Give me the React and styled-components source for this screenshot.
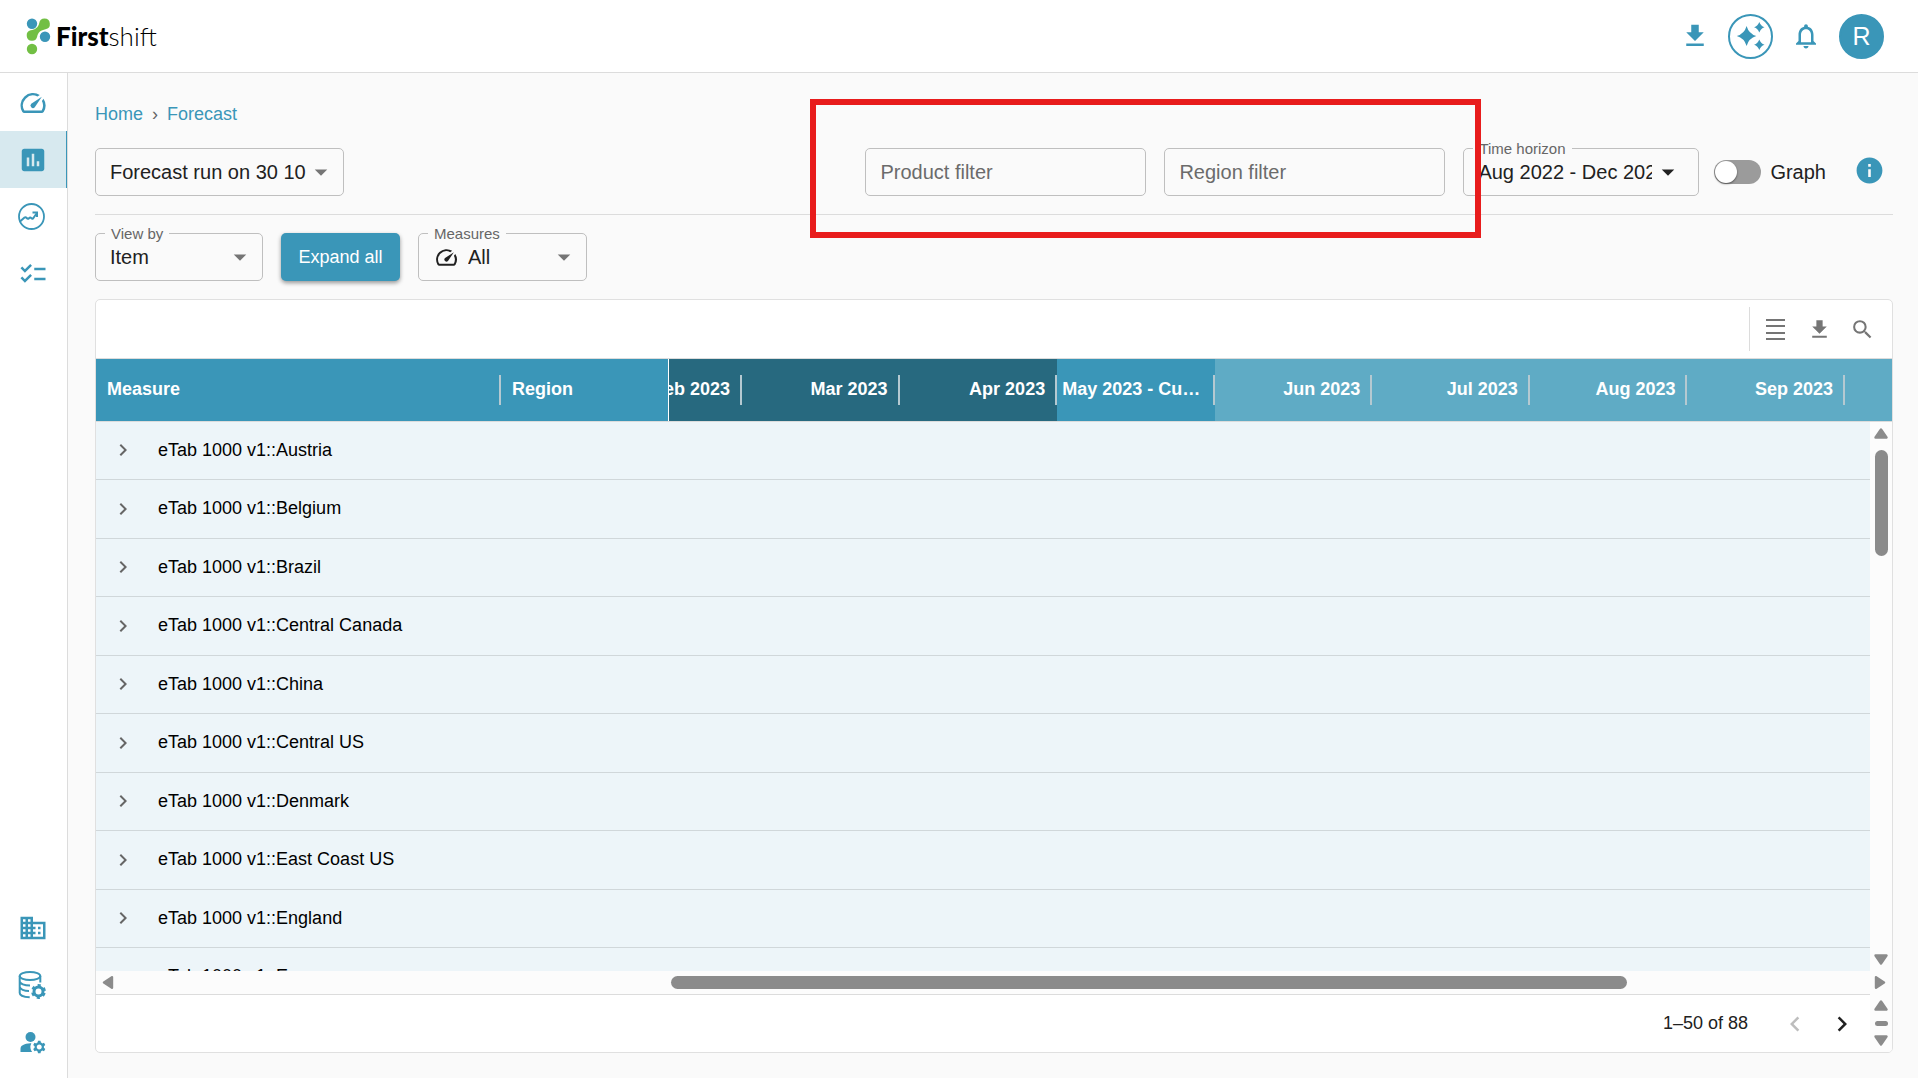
import React, { useState } from "react";
import styled, { createGlobalStyle } from "styled-components";
import {
  MdArrowDropDown,
  MdAssessment,
  MdBusiness,
  MdChecklist,
  MdChevronLeft,
  MdChevronRight,
  MdFileDownload,
  MdInfo,
  MdManageAccounts,
  MdNotificationsNone,
  MdOutlineSpeed,
  MdSearch
} from "react-icons/md";

const blue = "#3a96b8";
const line = "#dcdcdc";

const GlobalStyle = createGlobalStyle`
  * {
    box-sizing: border-box;
  }
  body {
    margin: 0;
    background: #fafafa;
    color: #212121;
    font-family: "Liberation Sans", Arial, sans-serif;
    font-size: 18px;
  }
  button, input, select {
    font-family: inherit;
    color: inherit;
  }
  svg {
    display: block;
  }
`;

const Page = styled.div`
  display: flex;
  flex-direction: column;
  height: 100vh;
`;

const TopBar = styled.header`
  display: flex;
  align-items: center;
  justify-content: space-between;
  height: 73px;
  padding: 0 34px 0 26px;
  background: white;
  border-bottom: 1px solid ${line};
`;

const Logo = styled.a`
  display: flex;
  align-items: center;
  gap: 5px;
  color: black;
  font-family: Lato, sans-serif;
  font-size: 26px;
  font-weight: 300;
  line-height: 36px;
  text-decoration: none;
  b {
    font-weight: 900;
  }
`;

const TopActions = styled.div`
  display: flex;
  align-items: center;
  gap: 18px;
`;

const IconButton = styled.button`
  display: flex;
  align-items: center;
  justify-content: center;
  padding: 0;
  border: none;
  background: none;
  color: ${p => p.$color || blue};
  cursor: pointer;
`;

const RoundButton = styled(IconButton)`
  width: 45px;
  height: 45px;
  border: 2px solid ${blue};
  border-radius: 50%;
  background: ${p => (p.$filled ? blue : "none")};
  color: ${p => (p.$filled ? "white" : blue)};
  font-size: 25px;
`;

const Body = styled.div`
  display: flex;
  flex: 1;
  min-height: 0;
`;

const SideBar = styled.nav`
  display: flex;
  flex-direction: column;
  width: 68px;
  padding: 1px 0 8px;
  background: white;
  border-right: 1px solid ${line};
`;

const NavLink = styled.a`
  display: flex;
  align-items: center;
  height: 57px;
  padding-left: 18px;
  color: ${blue};
  border-right: 1px solid ${p => (p.$active ? blue : "transparent")};
  background: ${p => (p.$active ? "#d7e9ef" : "none")};
`;

const Spacer = styled.div`
  flex: 1;
`;

const Main = styled.main`
  display: flex;
  flex: 1;
  flex-direction: column;
  min-width: 0;
  padding: 29px 25px 25px 27px;
`;

const Breadcrumb = styled.div`
  display: flex;
  gap: 9px;
  margin-bottom: 22px;
  color: #666;
  line-height: 24px;
  a {
    color: ${blue};
    text-decoration: none;
  }
`;

const ControlRow = styled.div`
  display: flex;
  align-items: center;
  gap: 18px;
  padding-bottom: 18px;
`;

const FilterRow = styled(ControlRow)`
  margin-bottom: 18px;
  border-bottom: 1px solid ${line};
`;

const Filters = styled.div`
  position: relative;
  display: flex;
  gap: 18px;
`;

const Highlight = styled.div`
  position: absolute;
  top: -49px;
  right: -36px;
  bottom: -42px;
  left: -55px;
  z-index: 2;
  border: 6px solid #e81c1c;
  pointer-events: none;
`;

const FilterInput = styled.input`
  width: 281px;
  height: 48px;
  padding: 0 14px;
  border: 1px solid #bfbfbf;
  border-radius: 5px;
  outline: none;
  background: none;
  font-size: 20px;
  &::placeholder {
    color: #6b6b6b;
    opacity: 1;
  }
`;

const Field = styled.div`
  position: relative;
  width: ${p => p.$width}px;
  label {
    position: absolute;
    top: -8px;
    left: 10px;
    padding: 0 6px;
    background: #fafafa;
    color: #666;
    font-size: 15px;
    line-height: 18px;
  }
  select {
    display: block;
    width: 100%;
    height: 48px;
    padding: 0 ${p => (p.$dark ? 46 : 32)}px 0 ${p => (p.$icon ? 49 : 14)}px;
    border: 1px solid #bfbfbf;
    border-radius: 5px;
    outline: none;
    appearance: none;
    background: none;
    font-size: 20px;
  }
`;

const Arrow = styled(MdArrowDropDown)`
  position: absolute;
  top: 9px;
  right: ${p => (p.$dark ? 16 : 8)}px;
  color: ${p => (p.$dark ? "#212121" : "#757575")};
  pointer-events: none;
`;

const FieldIcon = styled.span`
  position: absolute;
  top: 12px;
  left: 16px;
  pointer-events: none;
`;

const SwitchLabel = styled.label`
  display: flex;
  align-items: center;
  gap: 9px;
  margin: 0 10px 0 -3px;
  font-size: 20px;
  cursor: pointer;
`;

const Switch = styled.input`
  display: flex;
  width: 47px;
  height: 24px;
  margin: 0;
  border-radius: 12px;
  appearance: none;
  background: #9b9b9b;
  cursor: pointer;
  &::before {
    content: "";
    width: 22px;
    height: 22px;
    margin: 1px;
    border-radius: 50%;
    background: white;
    box-shadow: 0 1px 2px rgba(0, 0, 0, 0.5);
  }
  &:checked {
    justify-content: flex-end;
    background: ${blue};
  }
`;

const InfoButton = styled(IconButton)`
  margin-right: 8px;
  padding-bottom: 4px;
`;

const ExpandButton = styled.button`
  width: 119px;
  height: 48px;
  padding: 0;
  border: none;
  border-radius: 5px;
  background: ${blue};
  box-shadow: 0 2px 4px rgba(0, 0, 0, 0.4);
  color: white;
  font-size: 18px;
  cursor: pointer;
`;

const Card = styled.section`
  display: flex;
  flex: 1;
  flex-direction: column;
  min-height: 0;
  overflow: hidden;
  border: 1px solid #e0e0e0;
  border-radius: 5px;
  background: white;
`;

const ToolBar = styled.div`
  display: flex;
  align-items: center;
  justify-content: flex-end;
  height: 59px;
  padding-right: 17px;
  border-bottom: 1px solid ${line};
`;

const Tools = styled.div`
  display: flex;
  align-items: center;
  gap: 18px;
  height: 44px;
  padding-left: 14px;
  border-left: 1px solid ${line};
`;

const GridArea = styled.div`
  display: grid;
  flex: 1;
  grid-template-columns: 1fr 22px;
  grid-template-rows: 63px 1fr;
  min-height: 0;
`;

const Table = styled.table`
  display: contents;
`;

const Head = styled.thead`
  display: block;
  grid-column: 1 / -1;
  border-bottom: 1px solid ${line};
  tr {
    display: flex;
    height: 62px;
    background: #5fabc5;
  }
`;

const columnColors = {
  past: "#27697f",
  current: blue,
  future: "#5fabc5"
};

const HeadCell = styled.th`
  display: flex;
  align-items: center;
  justify-content: ${p => (p.$left ? "flex-start" : "flex-end")};
  flex: ${p => (p.$width ? `0 0 ${p.$width}px` : "1 1 0")};
  min-width: 0;
  padding: 0 0 0 ${p => (p.$left ? 11 : 0)}px;
  overflow: hidden;
  border-right: ${p => (p.$frozenEdge ? "1px solid white" : "none")};
  background: ${p => columnColors[p.$kind]};
  color: white;
  white-space: nowrap;
  &::after {
    content: "";
    flex: none;
    width: ${p => (p.$frozenEdge ? 0 : 2)}px;
    height: 30px;
    margin-left: ${p => (p.$left ? "auto" : "10px")};
    background: #b5c9d1;
  }
`;

const HeadText = styled.span`
  padding-bottom: 1px;
  ${p =>
    p.$ellipsis &&
    `
    min-width: 0;
    margin-left: 5px;
    overflow: hidden;
    text-overflow: ellipsis;
  `}
`;

const HeadEnd = styled.td`
  flex: 0 0 47px;
  padding: 0;
`;

const Rows = styled.tbody`
  display: block;
  min-height: 0;
  overflow: hidden;
  background: #edf5f9;
`;

const Row = styled.tr`
  display: flex;
  height: 58px;
  border-bottom: 1px solid #d0d7da;
  color: black;
  &:nth-child(even) {
    height: 59px;
  }
`;

const RowCell = styled.td`
  display: flex;
  align-items: center;
  gap: 23px;
  padding: 0 0 1px 15px;
  white-space: nowrap;
`;

const Bar = styled.div`
  display: flex;
  flex-direction: ${p => (p.$vertical ? "column" : "row")};
  align-items: center;
  gap: 5px;
  padding: ${p => (p.$vertical ? "5px 0" : "0 5px")};
  background: #fcfcfc;
`;

const Track = styled.div`
  flex: 1;
  min-width: 13px;
  min-height: 5px;
`;

const Thumb = styled.div`
  min-width: 13px;
  min-height: 5px;
  border-radius: 7px;
  background: #8b8b8b;
`;

const BarRow = styled.div`
  display: grid;
  height: 23px;
  ${Thumb} {
    height: 13px;
  }
`;

const Footer = styled.footer`
  display: grid;
  grid-template-columns: 1fr 22px;
  height: 58px;
`;

const Pager = styled.div`
  display: flex;
  align-items: center;
  justify-content: flex-end;
  gap: 17px;
  padding-right: 13px;
  border-top: 1px solid ${line};
`;

const PagerText = styled.span`
  margin-right: 15px;
`;

function LogoMark() {
  return (
    <svg width="25" height="37" viewBox="0 0 25 37">
      <path
        d="M18.5 0.5a5.4 5.4 0 0 1 1 10.7C15 12.2 12 14 11.2 18.5a5.3 5.3 0 1 1-6.5-6.2C9 11.5 12.3 9.5 13.2 5.2A5.4 5.4 0 0 1 18.5.5z"
        fill="#72bf44"
      />
      <circle cx="6" cy="5.7" r="5.2" fill="#3a96b8" />
      <circle cx="19" cy="18.8" r="5.2" fill="#3a96b8" />
      <circle cx="6" cy="31" r="5.2" fill="#72bf44" />
    </svg>
  );
}

function Sparkles() {
  return (
    <svg width="30" height="30" viewBox="0 0 30 30" fill="currentColor">
      <path d="M10.6 5Q12.8 12.8 20.3 15Q12.8 17.2 10.6 25Q8.4 17.2 0.8 15Q8.4 12.8 10.6 5z" />
      <path d="M23.3 1Q24.7 5 28.5 6.3Q24.7 7.6 23.3 11.6Q21.9 7.6 18.1 6.3Q21.9 5 23.3 1z" />
      <path d="M23.3 18.5Q24.7 22.5 28.5 23.8Q24.7 25.1 23.3 29.1Q21.9 25.1 18.1 23.8Q21.9 22.5 23.3 18.5z" />
    </svg>
  );
}

function TrendCircle() {
  return (
    <svg
      width="27"
      height="27"
      viewBox="0 0 27 27"
      fill="none"
      stroke="currentColor"
      strokeWidth="1.8"
    >
      <circle cx="13.5" cy="13.5" r="12.5" />
      <path
        d="M2 18.5l4.5-4c1-.7 1.5-.3 2.2.5.9 1 1.5 1 2.3.2.9-.9 1.6-.8 2.4 0 .8.8 1.4.5 2-.2l3.5-5"
        strokeWidth="2"
      />
      <path d="M14.5 9.5h4.5v4.5" strokeWidth="2" />
    </svg>
  );
}

function DatabaseGear() {
  return (
    <svg
      width="28"
      height="28"
      viewBox="0 0 28 28"
      fill="none"
      stroke="currentColor"
      strokeWidth="2"
    >
      <ellipse cx="12" cy="5" rx="10.3" ry="4" />
      <path d="M1.7 5v17c0 2.2 4 4 10 4.2M22.3 5v6.5M1.7 10.5c.3 2.2 4.5 4 10.3 4M1.7 16c.3 2.2 4.5 4 9.3 4" />
      <circle cx="20.5" cy="20.5" r="4.5" strokeWidth="3" />
      <circle
        cx="20.5"
        cy="20.5"
        r="6.2"
        strokeWidth="2.4"
        strokeDasharray="3.2 3.293"
        strokeDashoffset="-1.6"
      />
    </svg>
  );
}

function DensityIcon() {
  return (
    <svg width="25" height="25" viewBox="0 0 25 25" fill="currentColor">
      <path d="M2 2h19v2H2zM2 8h19v2H2zM2 15h19v2H2zM2 21h19v2H2z" />
    </svg>
  );
}

const arrowPaths = {
  up: "M7 2.5L12.5 10.5H1.5z",
  down: "M7 10.5L12.5 2.5H1.5z",
  left: "M3 6.5L11 1.2V11.8z",
  right: "M11 6.5L3 1.2V11.8z"
};

function ScrollArrow({ to }) {
  return (
    <IconButton type="button" $color="#8b8b8b" aria-label={`Scroll ${to}`}>
      <svg width="14" height="13" viewBox="0 0 14 13" fill="currentColor">
        <path
          d={arrowPaths[to]}
          stroke="currentColor"
          strokeWidth="2.4"
          strokeLinejoin="round"
        />
      </svg>
    </IconButton>
  );
}

function ScrollBar({ vertical, start, size }) {
  const thumb = vertical
    ? { width: 13, height: `${size}%` }
    : { width: `${size}%`, marginLeft: `${start}%` };
  return (
    <Bar $vertical={vertical}>
      <ScrollArrow to={vertical ? "up" : "left"} />
      <Track>
        {vertical && <div style={{ height: `${start}%` }} />}
        <Thumb style={thumb} />
      </Track>
      <ScrollArrow to={vertical ? "down" : "right"} />
    </Bar>
  );
}

function SelectField({ id, label, options, width, icon, dark }) {
  return (
    <Field $width={width} $icon={!!icon} $dark={dark}>
      <select id={id} aria-label={label ? undefined : "Forecast run"}>
        {options.map(o => (
          <option key={o}>{o}</option>
        ))}
      </select>
      {label && <label htmlFor={id}>{label}</label>}
      {icon && <FieldIcon>{icon}</FieldIcon>}
      <Arrow size={30} $dark={dark} />
    </Field>
  );
}

const topNav = [
  { name: "Dashboard", icon: <MdOutlineSpeed size={30} /> },
  { name: "Forecast", icon: <MdAssessment size={30} />, active: true },
  { name: "Trends", icon: <TrendCircle /> },
  { name: "Tasks", icon: <MdChecklist size={30} /> }
];

const bottomNav = [
  { name: "Company", icon: <MdBusiness size={30} /> },
  { name: "Data settings", icon: <DatabaseGear /> },
  { name: "User settings", icon: <MdManageAccounts size={30} /> }
];

const months = [
  { name: "Feb 2023", kind: "past", width: 73 },
  { name: "Mar 2023", kind: "past" },
  { name: "Apr 2023", kind: "past" },
  { name: "May 2023 - Current", kind: "current", ellipsis: true },
  { name: "Jun 2023", kind: "future" },
  { name: "Jul 2023", kind: "future" },
  { name: "Aug 2023", kind: "future" },
  { name: "Sep 2023", kind: "future" }
];

const regions = [
  "Austria",
  "Belgium",
  "Brazil",
  "Central Canada",
  "China",
  "Central US",
  "Denmark",
  "East Coast US",
  "England",
  "Europe"
];

function renderNav(items) {
  return items.map(k => (
    <NavLink key={k.name} href="#" aria-label={k.name} $active={k.active}>
      {k.icon}
    </NavLink>
  ));
}

function App() {
  const [graph, setGraph] = useState(false);
  return (
    <Page>
      <GlobalStyle />
      <TopBar>
        <Logo href="#">
          <LogoMark />
          <span>
            <b>First</b>shift
          </span>
        </Logo>
        <TopActions>
          <IconButton type="button" aria-label="Downloads">
            <MdFileDownload size={30} />
          </IconButton>
          <RoundButton type="button" aria-label="Assistant">
            <Sparkles />
          </RoundButton>
          <IconButton type="button" aria-label="Notifications">
            <MdNotificationsNone size={30} />
          </IconButton>
          <RoundButton type="button" $filled>
            R
          </RoundButton>
        </TopActions>
      </TopBar>
      <Body>
        <SideBar>
          {renderNav(topNav)}
          <Spacer />
          {renderNav(bottomNav)}
        </SideBar>
        <Main>
          <Breadcrumb>
            <a href="#">Home</a>
            <span>›</span>
            <a href="#">Forecast</a>
          </Breadcrumb>
          <FilterRow>
            <SelectField id="run" width={249} options={["Forecast run on 30 10"]} />
            <Spacer />
            <Filters>
              <FilterInput placeholder="Product filter" aria-label="Product filter" />
              <FilterInput placeholder="Region filter" aria-label="Region filter" />
              <Highlight />
            </Filters>
            <SelectField
              id="horizon"
              label="Time horizon"
              width={236}
              options={["Aug 2022 - Dec 2023"]}
              dark
            />
            <SwitchLabel>
              <Switch
                type="checkbox"
                checked={graph}
                onChange={e => setGraph(e.target.checked)}
              />
              Graph
            </SwitchLabel>
            <InfoButton type="button" aria-label="Info">
              <MdInfo size={31} />
            </InfoButton>
          </FilterRow>
          <ControlRow>
            <SelectField id="view" label="View by" width={168} options={["Item"]} />
            <ExpandButton type="button">Expand all</ExpandButton>
            <SelectField
              id="measures"
              label="Measures"
              width={169}
              options={["All"]}
              icon={<MdOutlineSpeed size={25} />}
            />
          </ControlRow>
          <Card>
            <ToolBar>
              <Tools>
                <IconButton type="button" $color="#757575" aria-label="Density">
                  <DensityIcon />
                </IconButton>
                <IconButton type="button" $color="#757575" aria-label="Export">
                  <MdFileDownload size={25} />
                </IconButton>
                <IconButton type="button" $color="#757575" aria-label="Search">
                  <MdSearch size={25} />
                </IconButton>
              </Tools>
            </ToolBar>
            <GridArea>
              <Table>
                <Head>
                  <tr>
                    <HeadCell $left $width={405} $kind="current">
                      <HeadText>Measure</HeadText>
                    </HeadCell>
                    <HeadCell $left $width={168} $kind="current" $frozenEdge>
                      <HeadText>Region</HeadText>
                    </HeadCell>
                    {months.map(m => (
                      <HeadCell key={m.name} $kind={m.kind} $width={m.width}>
                        <HeadText $ellipsis={m.ellipsis}>{m.name}</HeadText>
                      </HeadCell>
                    ))}
                    <HeadEnd />
                  </tr>
                </Head>
                <Rows>
                  {regions.map(r => (
                    <Row key={r}>
                      <RowCell>
                        <IconButton type="button" $color="#666" aria-label={`Expand ${r}`}>
                          <MdChevronRight size={24} />
                        </IconButton>
                        eTab 1000 v1::{r}
                      </RowCell>
                    </Row>
                  ))}
                </Rows>
              </Table>
              <ScrollBar vertical start={1} size={21} />
            </GridArea>
            <BarRow>
              <ScrollBar start={31.5} size={54.7} />
            </BarRow>
            <Footer>
              <Pager>
                <PagerText>1–50 of 88</PagerText>
                <IconButton type="button" $color="#bdbdbd" aria-label="Previous page">
                  <MdChevronLeft size={30} />
                </IconButton>
                <IconButton type="button" $color="#212121" aria-label="Next page">
                  <MdChevronRight size={30} />
                </IconButton>
              </Pager>
              <ScrollBar vertical start={30} size={30} />
            </Footer>
          </Card>
        </Main>
      </Body>
    </Page>
  );
}

export default App;
